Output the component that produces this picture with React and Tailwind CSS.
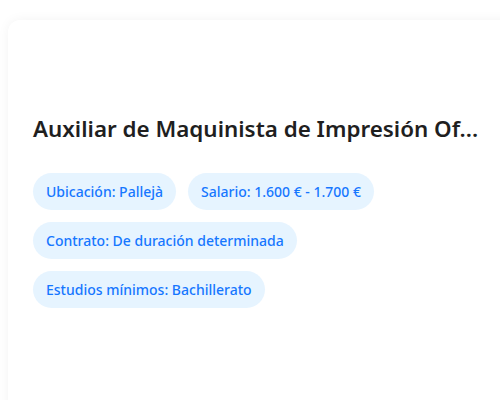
export default function App() {
  const chips = [
    ["Ubicación: Pallejà", "Salario: 1.600 € - 1.700 €"],
    ["Contrato: De duración determinada"],
    ["Estudios mínimos: Bachillerato"],
  ];
  return (
    <div className="h-[400px] w-[500px] overflow-hidden bg-white font-['Noto_Sans',sans-serif]">
      <div className="ml-2 mt-5 h-[420px] w-[520px] rounded-xl bg-white px-[25px] pt-[94px] shadow-[0_0_12px_rgba(0,0,0,0.05)]">
        <h1 className="whitespace-nowrap text-[22.4px] font-semibold leading-[30px] text-[#1f1f1f]">
          Auxiliar de Maquinista de Impresión Of...
        </h1>
        <div className="mt-[29px] flex flex-col gap-3">
          {chips.map((row, i) => (
            <div key={i} className="flex gap-3">
              {row.map((c) => (
                <span key={c} className="flex h-[37px] items-center rounded-full bg-[#e6f4ff] px-[13px] text-[14px] font-medium text-[#1677ff]">
                  {c}
                </span>
              ))}
            </div>
          ))}
        </div>
      </div>
    </div>
  );
}
